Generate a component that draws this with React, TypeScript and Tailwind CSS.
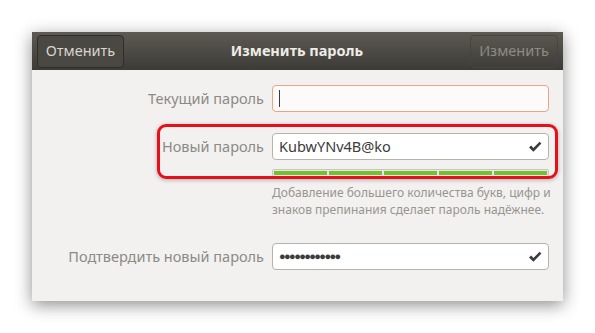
const font = { fontFamily: '"Noto Sans", "Open Sans", sans-serif' };

function HeavyCheck() {
  return (
    <svg width="14" height="12" viewBox="0 0 14 12" className="text-[#3c3c3c]">
      <path d="M1 6.5 L3.2 4.6 L5.4 7 L11.6 0.8 L13.4 2.6 L5.4 10.8 Z" fill="currentColor" />
    </svg>
  );
}

function Field({ value, dots, checked, accent }: { value?: string; dots?: boolean; checked?: boolean; accent?: boolean }) {
  return (
    <div
      className={`flex h-[27px] w-[277px] items-center rounded-[4px] border px-[6px] ${
        accent ? "border-[#eaa487] bg-[#fdfbfa]" : "border-[#b6b3ae] bg-white"
      }`}
    >
      {accent && <div className="h-[17px] w-px bg-[#3c3c3c]" />}
      <span className={`flex-1 text-[#3c3c3c] ${dots ? "text-[11px] tracking-[-1.6px]" : "text-[14.5px]"}`}>{value}</span>
      {checked && <HeavyCheck />}
    </div>
  );
}

export default function App() {
  return (
    <div className="flex h-[333px] w-[595px] bg-white" style={font}>
      <div className="mt-[32px] ml-[32px] flex h-[269px] w-[531px] flex-col bg-[#f2f1f0] shadow-[0_4px_16px_rgba(0,0,0,0.45)]">
        <div className="flex h-[38px] items-center justify-between bg-gradient-to-b from-[#5d5a53] to-[#3d3b37] px-[5px]">
          <button className="flex h-[33px] w-[87px] items-center justify-center rounded-[4px] border border-[#2f2e2b] bg-[#4a4843] text-[14.5px] text-[#d9d5cc]">
            Отменить
          </button>
          <span className="text-[14.5px] font-bold text-[#efece7]">Изменить пароль</span>
          <button className="flex h-[33px] w-[88px] items-center justify-center rounded-[4px] border border-[#47453f] text-[14.5px] text-[#8f8b83]">
            Изменить
          </button>
        </div>
        <div className="grid grid-cols-[232px_277px] gap-x-[8px] pt-[15px] text-[14.5px] text-[#8b8a86]">
          <span className="flex h-[27px] items-center justify-end">Текущий пароль</span>
          <Field accent />
          <div className="relative col-span-2 mt-[21px] grid grid-cols-[232px_277px] gap-x-[8px]">
            <div className="absolute top-[-9px] left-[125px] h-[55px] w-[401px] rounded-[9px] border-[3px] border-[#e5101b] shadow-[0_1px_4px_rgba(0,0,0,0.3)]" />
            <span className="flex h-[27px] items-center justify-end">Новый пароль</span>
            <Field value="KubwYNv4B@ko" checked />
            <span />
            <div className="mt-[9px] flex h-[8px] gap-[2px] rounded-[2px] border border-[#c9c6c1] bg-[#e8e6e3] p-px">
              <div className="flex-1 bg-[#72c12e]" />
              <div className="flex-1 bg-[#72c12e]" />
              <div className="flex-1 bg-[#72c12e]" />
              <div className="flex-1 bg-[#72c12e]" />
              <div className="flex-1 bg-[#72c12e]" />
            </div>
          </div>
          <span />
          <p className="mt-[7px] w-[290px] text-[12px] leading-[17px] whitespace-nowrap text-[#97958f]">
            Добавление большего количества букв, цифр и
            <br />
            знаков препинания сделает пароль надёжнее.
          </p>
          <span className="mt-[25px] flex h-[27px] items-center justify-end">Подтвердить новый пароль</span>
          <div className="mt-[25px]">
            <Field value="●●●●●●●●●●●●" dots checked />
          </div>
        </div>
      </div>
    </div>
  );
}
